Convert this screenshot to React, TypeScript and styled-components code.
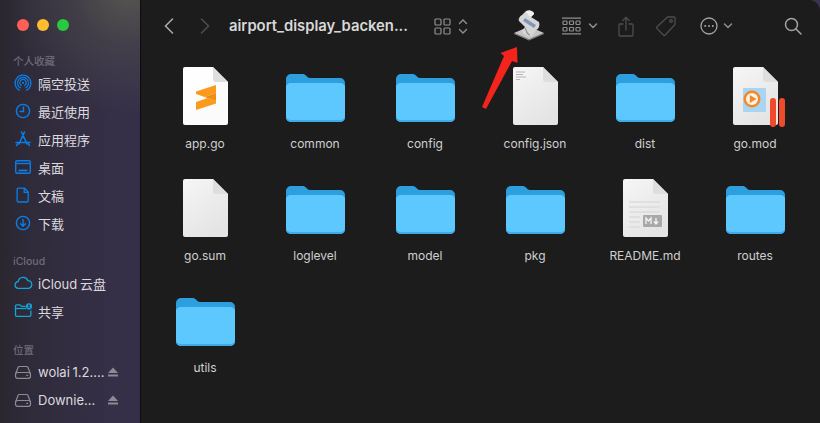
import { useId } from 'react';
import styled, { createGlobalStyle } from 'styled-components';

const GlobalStyle = createGlobalStyle`
  html, body {
    margin: 0;
    padding: 0;
    width: 820px;
    height: 423px;
    overflow: hidden;
    background: #3a3350;
  }
  * { box-sizing: border-box; }
`;

const FONT = `Inter, "Liberation Sans", "Noto Sans CJK SC", sans-serif`;

// ---------- layout ----------
const Window = styled.div`
  position: relative;
  width: 820px;
  height: 423px;
  display: flex;
  overflow: hidden;
  font-family: ${FONT};
  border-top-right-radius: 11px;
`;

const Sidebar = styled.aside`
  width: 141px;
  flex: none;
  padding: 19px 0 0 13px;
  border-right: 1px solid #0c0c0e;
  background:
    radial-gradient(circle at 130px -10px, rgba(88, 88, 80, 0.95) 0, rgba(78, 76, 76, 0.55) 55px, rgba(60, 52, 72, 0) 125px),
    linear-gradient(90deg, #2a272f 0, #2f2b3a 30px, #352f47 110px, #362f49 140px);
`;

const Lights = styled.div`
  display: flex;
  gap: 8px;
  padding-left: 4px;
  margin-bottom: 21px;
`;

const Light = styled.span<{ $color: string }>`
  width: 12px;
  height: 12px;
  border-radius: 50%;
  background: ${({ $color }) => $color};
`;

const Section = styled.section`
  margin-bottom: 15px;
  &:nth-of-type(2) {
    margin-bottom: 16px;
  }
`;

const SectionTitle = styled.div`
  height: 17px;
  line-height: 20px;
  font-size: 10.5px;
  font-weight: 500;
  color: #6f6b76;
`;

const Row = styled.div`
  height: 28px;
  display: flex;
  align-items: center;
  gap: 5px;
  font-size: 13px;
  word-spacing: -1px;
  color: #dcdade;
  white-space: nowrap;
`;

const RowIcon = styled.svg`
  width: 20px;
  height: 20px;
  flex: none;
  fill: none;
`;

const RowLabel = styled.span`
  width: 64px;
  flex: none;
`;

const Eject = styled.svg`
  width: 12px;
  height: 12px;
  flex: none;
`;

const Main = styled.main`
  flex: 1;
  min-width: 0;
  background: #1c1c1d;
`;

const Toolbar = styled.header`
  height: 52px;
  display: flex;
  align-items: center;
  padding-left: 20px;
`;

const Tool = styled.svg<{ $ml?: number; $w: number; $h: number }>`
  width: ${({ $w }) => $w}px;
  height: ${({ $h }) => $h}px;
  margin-left: ${({ $ml }) => $ml ?? 0}px;
  flex: none;
  fill: none;
  overflow: visible;
`;

const Title = styled.h1`
  margin: 0 0 0 16px;
  width: 186px;
  flex: none;
  font-size: 14.8px;
  font-weight: 600;
  color: #d8d8d8;
  white-space: nowrap;
`;

const Files = styled.div`
  display: grid;
  grid-template-columns: repeat(6, 110px);
  grid-auto-rows: 112px;
  padding: 13px 0 0 9px;
`;

const FileCell = styled.div`
  display: flex;
  flex-direction: column;
  align-items: center;
`;

const FileArt = styled.svg`
  width: 64px;
  height: 64px;
  flex: none;
  overflow: visible;
`;

const FileName = styled.span`
  margin-top: 7px;
  font-size: 12px;
  line-height: 16px;
  color: #cfcfcf;
  white-space: nowrap;
`;

const Arrow = styled.svg`
  position: absolute;
  left: 478px;
  top: 42px;
  width: 44px;
  height: 70px;
`;

// ---------- file icons ----------
const DOC = 'M12 2H40L55 17V58a2 2 0 0 1-2 2H12a2 2 0 0 1-2-2V4a2 2 0 0 1 2-2Z';

function Doc({ light, children }: { light?: boolean; children?: React.ReactNode }) {
  const id = useId();
  return (
    <FileArt viewBox="0 0 64 64">
      <defs>
        <linearGradient id={id} x1="0" y1="0" x2="0.6" y2="1">
          <stop offset="0" stopColor={light ? '#ffffff' : '#f6f6f6'} />
          <stop offset="1" stopColor={light ? '#fbfbfb' : '#e4e4e4'} />
        </linearGradient>
      </defs>
      <path d={DOC} fill={`url(#${id})`} />
      <path d="M40 2L55 17H43a3 3 0 0 1-3-3Z" fill="#dedede" />
      {children}
    </FileArt>
  );
}

function Folder() {
  return (
    <FileArt viewBox="0 0 64 64">
      <path d="M3 14a5 5 0 0 1 5-5h12c3 0 4 4 7 4h30a5 5 0 0 1 5 5v34a5 5 0 0 1-5 5H8a5 5 0 0 1-5-5Z" fill="#2d9fdf" />
      <path d="M3 21a5 5 0 0 1 4-3H58a5 5 0 0 1 4 3V52a5 5 0 0 1-5 5H8a5 5 0 0 1-5-5Z" fill="#5cc8fd" />
      <path d="M3 52v-1a5 5 0 0 0 5 4H57a5 5 0 0 0 5-4v1a5 5 0 0 1-5 5H8a5 5 0 0 1-5-5Z" fill="#3fabea" />
    </FileArt>
  );
}

const Sublime = () => (
  <Doc light>
    <path d="M23 26.5L43 20V28L31.5 32L43 36V38.5L23 45V37L34.5 33L23 29Z" fill="#fb9a1b" />
    <path d="M31.5 32L43 28V36Z" fill="#f08c14" />
  </Doc>
);

const JsonDoc = () => (
  <Doc>
    <path d="M13 7h9M13 9.5h7M13 12h10M13 14.5h4" stroke="#b5b5b5" strokeWidth="1" />
  </Doc>
);

const MediaDoc = () => (
  <Doc>
    <rect x="20" y="23" width="23" height="24" rx="1" fill="#a9d4f2" />
    <circle cx="29" cy="34" r="8.5" fill="#f18a2d" />
    <circle cx="29" cy="34" r="6" fill="#fdf3e4" />
    <path d="M26.8 30L33.5 34L26.8 38Z" fill="#f18a2d" />
    <rect x="47" y="33" width="6" height="29" rx="3" fill="#f04a2a" />
    <rect x="56" y="33" width="6" height="29" rx="3" fill="#f04a2a" />
  </Doc>
);

const MarkdownDoc = () => (
  <Doc>
    <path d="M16 25H47M16 30H47M16 35H47M16 40H27M16 45H27M16 50H27" stroke="#dcdcdc" strokeWidth="1.6" />
    <rect x="30" y="38" width="19" height="12" rx="1" fill="#a9a9a9" />
    <path d="M33 47V41l2.5 3 2.5-3v6M43 41v5.5M41 44.5l2 2.4 2-2.4" stroke="#f4f4f4" strokeWidth="1.3" fill="none" />
  </Doc>
);

const FILES: { name: string; art: React.ReactNode }[] = [
  { name: 'app.go', art: <Sublime /> },
  { name: 'common', art: <Folder /> },
  { name: 'config', art: <Folder /> },
  { name: 'config.json', art: <JsonDoc /> },
  { name: 'dist', art: <Folder /> },
  { name: 'go.mod', art: <MediaDoc /> },
  { name: 'go.sum', art: <Doc /> },
  { name: 'loglevel', art: <Folder /> },
  { name: 'model', art: <Folder /> },
  { name: 'pkg', art: <Folder /> },
  { name: 'README.md', art: <MarkdownDoc /> },
  { name: 'routes', art: <Folder /> },
  { name: 'utils', art: <Folder /> },
];

// ---------- sidebar icons ----------
const BLUE = '#0a7de8';
const CYAN = '#12a5d8';

const SIDE_ICONS: Record<string, React.ReactNode> = {
  airdrop: (
    <g stroke={BLUE} strokeWidth="1.2" strokeLinecap="round">
      <path d="M6.5 17.2a7.9 7.9 0 1 1 7 0" />
      <path d="M7.4 14.8a5.5 5.5 0 1 1 5.2 0" />
      <path d="M8.4 12.4a3.2 3.2 0 1 1 3.2 0" />
      <circle cx="10" cy="9.8" r="1.1" fill={BLUE} stroke="none" />
    </g>
  ),
  recent: (
    <g stroke={BLUE} strokeWidth="1.4" strokeLinecap="round">
      <circle cx="10" cy="10" r="6.6" />
      <path d="M10.5 6v4.5H7" />
    </g>
  ),
  apps: (
    <g stroke={BLUE} strokeWidth="1.6" strokeLinecap="round">
      <path d="M11.5 3L6 15M8.5 3l5.5 12M3 13.5H17" />
      <path d="M3.5 16.5L5 14.5M16.5 16.5L15 14.5" strokeWidth="1.4" />
    </g>
  ),
  desktop: (
    <g stroke={BLUE} strokeWidth="1.4">
      <rect x="2.7" y="3.7" width="14.6" height="12.6" rx="1.5" />
      <path d="M2.7 6.5H17.3" />
      <path d="M5.5 13.5H14.5" strokeWidth="1.8" />
    </g>
  ),
  docs: (
    <path d="M5.3 3.2H11.5L15.2 7V16a1.2 1.2 0 0 1-1.2 1H5.3a1.2 1.2 0 0 1-1.2-1V4.4a1.2 1.2 0 0 1 1.2-1.2ZM11.2 3.4V7.3H15" stroke={BLUE} strokeWidth="1.3" />
  ),
  downloads: (
    <g stroke={BLUE} strokeWidth="1.4" strokeLinecap="round">
      <circle cx="10" cy="10" r="6.6" />
      <path d="M10 6.5V13M7.6 10.8L10 13.2l2.4-2.4" />
    </g>
  ),
  cloud: (
    <path d="M5.8 15.3a3.4 3.4 0 0 1-.6-6.8 5 5 0 0 1 9.6-.9 3.9 3.9 0 0 1 .9 7.7Z" stroke={CYAN} strokeWidth="1.3" />
  ),
  shared: (
    <g stroke={CYAN} strokeWidth="1.3">
      <path d="M12.5 5.4H8.6L7 3.8H3.7a1.2 1.2 0 0 0-1.2 1.2V14a1.3 1.3 0 0 0 1.3 1.3H16.6A1.3 1.3 0 0 0 17.9 14V9.5" />
      <path d="M2.5 7.5H13" />
      <circle cx="16" cy="5.4" r="3.1" fill={CYAN} stroke="none" />
      <circle cx="16" cy="4.5" r="1" fill="#332d44" stroke="none" />
      <path d="M14.4 7.2a1.7 1.7 0 0 1 3.2 0" stroke="#332d44" strokeWidth="0.8" />
    </g>
  ),
  disk: (
    <g stroke="#8d8a94" strokeWidth="1.2">
      <path d="M2.5 12.2L5 5.5a1.5 1.5 0 0 1 1.4-1H13.6a1.5 1.5 0 0 1 1.4 1l2.5 6.7" />
      <rect x="2.5" y="10.5" width="15" height="5.8" rx="2" />
      <path d="M13.8 13.4h.8" strokeLinecap="round" />
    </g>
  ),
};

type Item = { icon: string; label: string; eject?: boolean };

const FAVOURITES: Item[] = [
  { icon: 'airdrop', label: '隔空投送' },
  { icon: 'recent', label: '最近使用' },
  { icon: 'apps', label: '应用程序' },
  { icon: 'desktop', label: '桌面' },
  { icon: 'docs', label: '文稿' },
  { icon: 'downloads', label: '下载' },
];
const ICLOUD: Item[] = [
  { icon: 'cloud', label: 'iCloud 云盘' },
  { icon: 'shared', label: '共享' },
];
const PLACES: Item[] = [
  { icon: 'disk', label: 'wolai 1.2....', eject: true },
  { icon: 'disk', label: 'Downie...', eject: true },
];

function SideSection({ title, items }: { title: string; items: Item[] }) {
  return (
    <Section>
      <SectionTitle>{title}</SectionTitle>
      {items.map(({ icon, label, eject }) => (
        <Row key={label}>
          <RowIcon viewBox="0 0 20 20">{SIDE_ICONS[icon]}</RowIcon>
          <RowLabel>{label}</RowLabel>
          {eject && (
            <Eject viewBox="0 0 12 12">
              <path d="M6 1.5L11 7H1Z M1 8.6H11V10.6H1Z" fill="#8d8a94" />
            </Eject>
          )}
        </Row>
      ))}
    </Section>
  );
}

export default function App() {
  return (
    <>
      <GlobalStyle />
      <Window>
        <Sidebar>
          <Lights>
            <Light $color="#ff5f57" />
            <Light $color="#febc2e" />
            <Light $color="#28c840" />
          </Lights>
          <SideSection title="个人收藏" items={FAVOURITES} />
          <SideSection title="iCloud" items={ICLOUD} />
          <SideSection title="位置" items={PLACES} />
        </Sidebar>
        <Main>
          <Toolbar>
            <Tool $w={16} $h={18} viewBox="0 0 16 18" stroke="#a8a8a8" strokeWidth="1.6" strokeLinecap="round">
              <path d="M11.5 2L4.5 9l7 7" />
            </Tool>
            <Tool $ml={20} $w={16} $h={18} viewBox="0 0 16 18" stroke="#4c4c4c" strokeWidth="1.6" strokeLinecap="round">
              <path d="M4.5 2l7 7-7 7" />
            </Tool>
            <Title>airport_display_backen...</Title>
            <Tool $ml={19} $w={17} $h={17} viewBox="0 0 17 17" stroke="#8f8f8f" strokeWidth="1.2">
              <rect x="1" y="1" width="6" height="6" rx="1" />
              <rect x="10" y="1" width="6" height="6" rx="1" />
              <rect x="1" y="10" width="6" height="6" rx="1" />
              <rect x="10" y="10" width="6" height="6" rx="1" />
            </Tool>
            <Tool $ml={7} $w={10} $h={17} viewBox="0 0 10 17" stroke="#8f8f8f" strokeWidth="1.4" strokeLinecap="round">
              <path d="M1.5 5.5L5 2l3.5 3.5M1.5 11.5L5 15l3.5-3.5" />
            </Tool>
            <Tool $ml={45} $w={32} $h={32} viewBox="0 0 32 32">
              <path d="M16 16.5L31 23 16 29.5 1 23Z" fill="#c4c4c4" />
              <path d="M1 23L16 29.5 31 23V24L16 30.5 1 24Z" fill="#858585" />
              <path d="M13 1C16-.5 21 1 21 4L18 7L26 12C27 15 26 19 23 20L19 26C15 27 10 25 9 21L12 17L6 11C5 9 7 6 9 5Z" fill="#d6d6d6" />
              <path d="M13 1C16-.5 21 1 21 4L18 7L15 5Z" fill="#f0f0f0" />
              <path d="M11 9.5L22 16.5" stroke="#7f97b8" strokeWidth="3.4" />
              <path d="M12 18C14 21 13 24 17 25" stroke="#979797" strokeWidth="1.2" />
            </Tool>
            <Tool $ml={17} $w={19} $h={18} viewBox="0 0 19 18" stroke="#8f8f8f" strokeWidth="1.2">
              <path d="M0 1.2H19M0 16.8H19" />
              <rect x="1" y="4" width="4" height="3.5" rx=".8" />
              <rect x="7.5" y="4" width="4" height="3.5" rx=".8" />
              <rect x="14" y="4" width="4" height="3.5" rx=".8" />
              <rect x="1" y="10.5" width="4" height="3.5" rx=".8" />
              <rect x="7.5" y="10.5" width="4" height="3.5" rx=".8" />
              <rect x="14" y="10.5" width="4" height="3.5" rx=".8" />
            </Tool>
            <Tool $ml={7} $w={10} $h={8} viewBox="0 0 10 8" stroke="#8f8f8f" strokeWidth="1.5" strokeLinecap="round">
              <path d="M1.5 2L5 5.5 8.5 2" />
            </Tool>
            <Tool $ml={20} $w={16} $h={21} viewBox="0 0 16 21" stroke="#4d4d4d" strokeWidth="1.3" strokeLinecap="round">
              <path d="M5 8H2a1 1 0 0 0-1 1v10a1 1 0 0 0 1 1h12a1 1 0 0 0 1-1V9a1 1 0 0 0-1-1h-3M8 14V1.5M4.8 4.5L8 1.3l3.2 3.2" />
            </Tool>
            <Tool $ml={21} $w={22} $h={22} viewBox="0 0 22 22" stroke="#4d4d4d" strokeWidth="1.3">
              <path d="M12.5 2H19a1 1 0 0 1 1 1v6.5L10 20.2a1 1 0 0 1-1.4 0L1.8 13.4a1 1 0 0 1 0-1.4Z" />
              <circle cx="16" cy="6" r="1.3" />
            </Tool>
            <Tool $ml={23} $w={18} $h={18} viewBox="0 0 18 18" stroke="#a4a4a4" strokeWidth="1.3">
              <circle cx="9" cy="9" r="8" />
              <circle cx="5.2" cy="9" r="1" fill="#a4a4a4" stroke="none" />
              <circle cx="9" cy="9" r="1" fill="#a4a4a4" stroke="none" />
              <circle cx="12.8" cy="9" r="1" fill="#a4a4a4" stroke="none" />
            </Tool>
            <Tool $ml={5} $w={10} $h={8} viewBox="0 0 10 8" stroke="#8f8f8f" strokeWidth="1.5" strokeLinecap="round">
              <path d="M1.5 2L5 5.5 8.5 2" />
            </Tool>
            <Tool $ml={51} $w={18} $h={18} viewBox="0 0 18 18" stroke="#a4a4a4" strokeWidth="1.5" strokeLinecap="round">
              <circle cx="7.5" cy="7.5" r="6" />
              <path d="M12 12l5 5" />
            </Tool>
          </Toolbar>
          <Files>
            {FILES.map(({ name, art }) => (
              <FileCell key={name}>
                {art}
                <FileName>{name}</FileName>
              </FileCell>
            ))}
          </Files>
        </Main>
        <Arrow viewBox="0 0 44 70">
          <path d="M4 65L26 14 22.5 11 39 5 39.5 21 34 19 8 67Z" fill="#f2241c" />
        </Arrow>
      </Window>
    </>
  );
}
